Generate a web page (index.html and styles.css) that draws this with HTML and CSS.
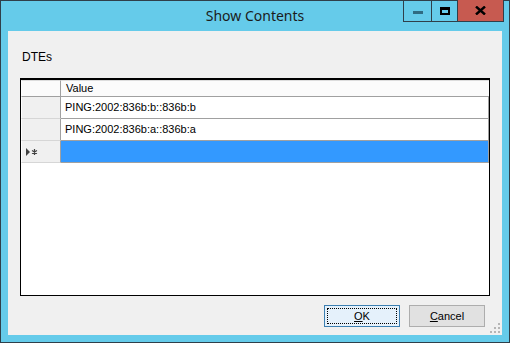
FILE: index.html
```html
<!DOCTYPE html>
<html>
<head>
    <title>Show Contents</title>
    <link rel="stylesheet" href="styles.css">
</head>
<body>
    <div class="window">
        <div class="caption">
            <span class="title">Show Contents</span>
            <div class="caption-buttons">
                <div class="cbtn min"><span class="min-bar"></span></div>
                <div class="cbtn max"><span class="max-box"></span></div>
                <div class="cbtn close">
                    <svg width="11" height="9" viewBox="0 0 11 9">
                        <path d="M1 0.5 L10 8.5 M10 0.5 L1 8.5" stroke="#000" stroke-width="2.4"/>
                    </svg>
                </div>
            </div>
        </div>
        <div class="client">
            <div class="label">DTEs</div>
            <div class="grid">
                <div class="grid-row header-row">
                    <div class="rowhead corner"></div>
                    <div class="cell colhead">Value</div>
                </div>
                <div class="grid-row">
                    <div class="rowhead"></div>
                    <div class="cell">PING:2002:836b:b::836b:b</div>
                </div>
                <div class="grid-row">
                    <div class="rowhead"></div>
                    <div class="cell">PING:2002:836b:a::836b:a</div>
                </div>
                <div class="grid-row">
                    <div class="rowhead">
                        <svg width="12" height="8" viewBox="0 0 12 8">
                            <path d="M0 0 L4 4 L0 8 Z" fill="#404040"/>
                            <path d="M8.5 1 V7 M6 2.5 L11 5.5 M11 2.5 L6 5.5" stroke="#404040" stroke-width="1.2"/>
                        </svg>
                    </div>
                    <div class="cell selected"></div>
                </div>
            </div>
            <div class="buttons">
                <button class="btn default"><span class="focus"><u>O</u>K</span></button>
                <button class="btn"><u>C</u>ancel</button>
            </div>
            <div class="grip">
                <svg width="10" height="10" viewBox="0 0 10 10" fill="#b5b5b5">
                    <rect x="8" y="0" width="2" height="2"/>
                    <rect x="4" y="4" width="2" height="2"/>
                    <rect x="8" y="4" width="2" height="2"/>
                    <rect x="0" y="8" width="2" height="2"/>
                    <rect x="4" y="8" width="2" height="2"/>
                    <rect x="8" y="8" width="2" height="2"/>
                </svg>
            </div>
        </div>
    </div>
</body>
</html>
```

FILE: styles.css
```css
* {
    box-sizing: border-box;
}
body {
    margin: 0;
    width: 510px;
    height: 343px;
    overflow: hidden;
    font-family: "Liberation Sans", Arial, sans-serif;
    font-size: 11px;
    color: #000;
}
.window {
    width: 510px;
    height: 343px;
    background: #65cbea;
    border: 1px solid #2f3f4a;
    display: flex;
    flex-direction: column;
}
.caption {
    height: 30px;
    position: relative;
    display: flex;
    justify-content: center;
}
.title {
    font-family: "Noto Sans", sans-serif;
    font-size: 14px;
    line-height: 30px;
    color: #1b1b1b;
}
.caption-buttons {
    position: absolute;
    top: -1px;
    right: 5px;
    display: flex;
    border: 1px solid #2f3f4a;
    border-top: none;
    height: 22px;
}
.cbtn {
    display: flex;
    align-items: center;
    justify-content: center;
    height: 21px;
}
.min {
    width: 28px;
    border-right: 1px solid #2f3f4a;
}
.min-bar {
    width: 10px;
    height: 3px;
    background: #2f6b82;
    margin-top: 3px;
}
.max {
    width: 26px;
    border-right: 1px solid #2f3f4a;
}
.max-box {
    width: 10px;
    height: 8px;
    border: 2px solid #000;
    border-top-width: 3px;
}
.close {
    width: 45px;
    background: #c75a50;
}
.client {
    flex: 1;
    margin: 0 7px 7px 7px;
    background: #f0f0f0;
    position: relative;
    display: flex;
    flex-direction: column;
}
.label {
    margin: 20px 0 0 14px;
    height: 27px;
    line-height: 13px;
    font-size: 12px;
}
.grid {
    margin-left: 12px;
    width: 470px;
    height: 218px;
    background: #fff;
    border: 1px solid #000;
    border-top-width: 2px;
}
.grid-row {
    display: flex;
    height: 22px;
}
.header-row {
    height: 17px;
}
.rowhead {
    width: 40px;
    background: #f0f0f0;
    border-right: 1px solid #a0a0a0;
    border-bottom: 1px solid #d6d6d6;
    border-left: 1px solid #fff;
    display: flex;
    align-items: center;
    padding-left: 4px;
}
.corner {
    background: #fbfbfb;
    border-top: 1px solid #dcdcdc;
    border-bottom: 1px solid #a0a0a0;
}
.cell {
    width: 428px;
    border-right: 1px solid #a0a0a0;
    border-bottom: 1px solid #a0a0a0;
    padding-left: 4px;
    line-height: 21px;
}
.colhead {
    background: #fbfbfb;
    border-top: 1px solid #dcdcdc;
    border-right: none;
    line-height: 15px;
    padding-left: 5px;
}
.selected {
    background: #3399ff;
}
.buttons {
    display: flex;
    justify-content: flex-end;
    gap: 9px;
    margin: 9px 17px 0 0;
}
.btn {
    width: 76px;
    height: 22px;
    background: #e1e1e1;
    border: 1px solid #adadad;
    font-family: "Liberation Sans", Arial, sans-serif;
    font-size: 11px;
    color: #000;
    padding: 0;
    display: flex;
    align-items: center;
    justify-content: center;
}
.default {
    border-color: #3c7fb1;
    background: #e5f1fb;
    padding: 2px;
}
.focus {
    width: 100%;
    height: 100%;
    border: 1px dotted #000;
    display: flex;
    align-items: center;
    justify-content: center;
}
.grip {
    position: absolute;
    right: 2px;
    bottom: 2px;
    height: 10px;
    line-height: 0;
}
```
